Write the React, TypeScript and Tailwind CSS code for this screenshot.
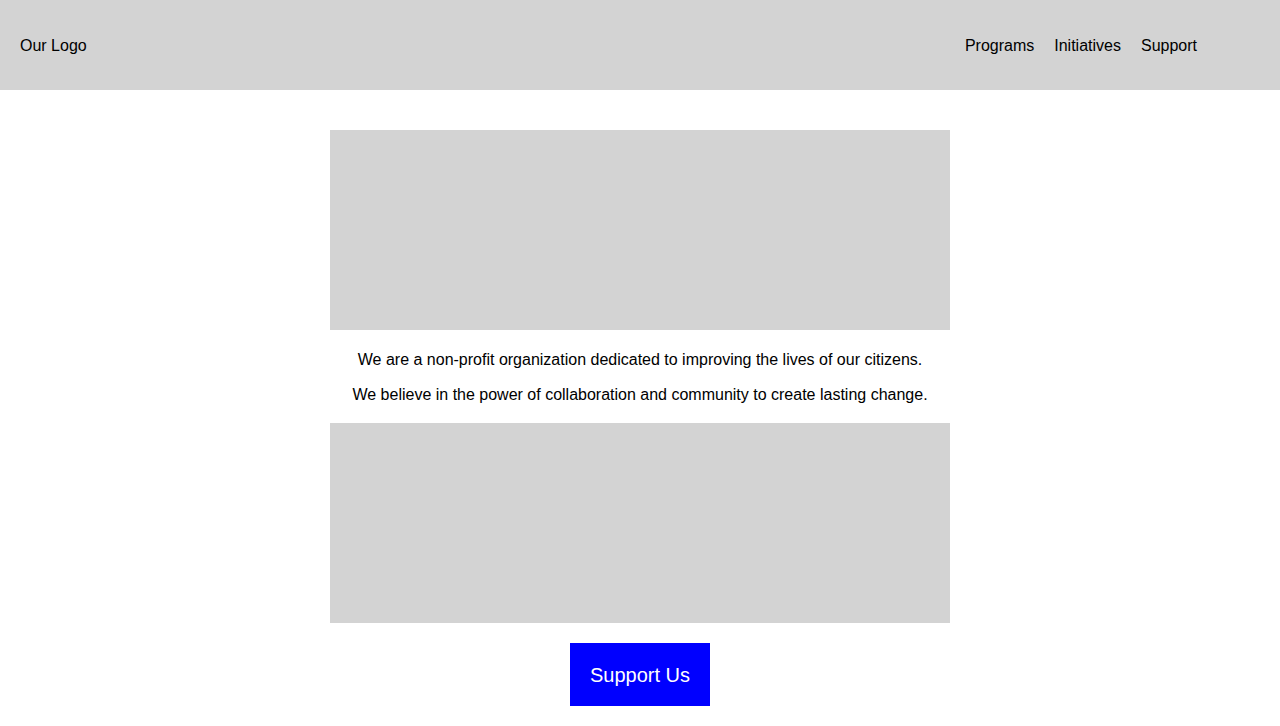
export default function App() {
  return (
    <div className="min-h-screen bg-white text-black" style={{ fontFamily: '"Liberation Sans", Arial, sans-serif' }}>
      <header className="flex h-[90px] items-center justify-between bg-[#d3d3d3] pl-5 pr-[83px] pt-[2px]">
        <div className="text-base leading-[18px]">Our Logo</div>
        <nav className="flex gap-5 text-base leading-[18px]">
          <a>Programs</a>
          <a>Initiatives</a>
          <a>Support</a>
        </nav>
      </header>
      <main className="flex flex-col items-center pt-10 pb-5">
        <div className="h-[200px] w-[620px] bg-[#d3d3d3]" />
        <p className="mt-[21px] text-base leading-[18px]">We are a non-profit organization dedicated to improving the lives of our citizens.</p>
        <p className="mt-[17px] text-base leading-[18px]">We believe in the power of collaboration and community to create lasting change.</p>
        <div className="mt-[19px] h-[200px] w-[620px] bg-[#d3d3d3]" />
        <button className="mt-5 h-[63px] w-[140px] whitespace-nowrap bg-[#0000ff] pt-[2px] text-[20px] leading-[23px] text-white">Support Us</button>
      </main>
    </div>
  );
}
